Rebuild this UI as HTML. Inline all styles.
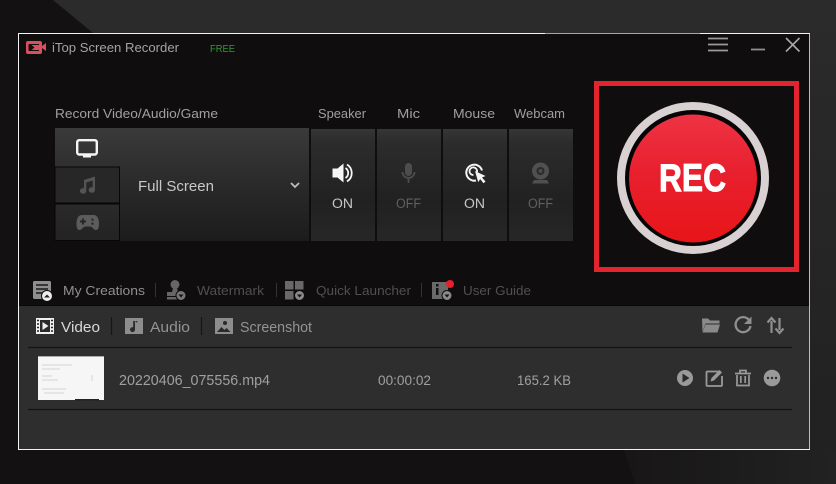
<!DOCTYPE html>
<html><head><meta charset="utf-8"><style>
html,body{margin:0;padding:0;background:#131112;width:836px;height:484px;overflow:hidden}
svg{display:block;font-family:"Liberation Sans",sans-serif;filter:blur(.35px)}
</style></head><body>
<svg width="836" height="484" viewBox="0 0 836 484" xmlns="http://www.w3.org/2000/svg">
<defs>
<linearGradient id="m" x1="0" y1="0" x2="0" y2="1"><stop offset="0" stop-color="#3a3a3a"/><stop offset=".5" stop-color="#2a2a2a"/><stop offset="1" stop-color="#1c1c1c"/></linearGradient>
<linearGradient id="s" x1="0" y1="0" x2="0" y2="1"><stop offset="0" stop-color="#363636"/><stop offset=".12" stop-color="#2c2c2c"/><stop offset=".65" stop-color="#212121"/><stop offset="1" stop-color="#272727"/></linearGradient>
<linearGradient id="t1" x1="0" y1="0" x2="0" y2="1"><stop offset="0" stop-color="#2a2a2a"/><stop offset="1" stop-color="#232323"/></linearGradient>
<linearGradient id="r" x1="0" y1="0" x2="0" y2="1"><stop offset="0" stop-color="#ee3344"/><stop offset=".45" stop-color="#e8202e"/><stop offset="1" stop-color="#e81518"/></linearGradient>
<linearGradient id="bgr" x1="0" y1="0" x2="1" y2="0"><stop offset="0" stop-color="#181616"/><stop offset="1" stop-color="#222"/></linearGradient>
<linearGradient id="rc" x1="0" y1="0" x2="0" y2="1"><stop offset="0" stop-color="#2a2a2a"/><stop offset="1" stop-color="#212121"/></linearGradient>
</defs>
<rect width="836" height="484" fill="#131112"/>
<polygon points="53,0 836,0 836,33 93,33" fill="#2b2b2b"/>
<rect x="810" y="33" width="26" height="417" fill="url(#rc)"/>
<polygon points="624,450 836,450 836,484 635,484" fill="url(#bgr)"/>

<!-- window -->
<rect x="18.500" y="33.500" width="791" height="416" fill="#0f0d0e"/>
<rect x="19" y="306" width="790" height="143" fill="#2e2e2e"/>
<rect x="19" y="305" width="790" height="1" fill="#080808"/>
<rect x="18.500" y="33.500" width="791" height="416" fill="none" stroke="#f2f2f2" stroke-width="1"/>
<line x1="545" y1="33.500" x2="700" y2="33.500" stroke="#a5a5a5"/>
<line x1="809.500" y1="34" x2="809.500" y2="449" stroke="#bdbdbd"/>

<!-- title bar -->
<g fill="#d8505c">
<path fill-rule="evenodd" d="M28 41h12a2 2 0 0 1 2 2v9a2 2 0 0 1-2 2H28a2 2 0 0 1-2-2v-9a2 2 0 0 1 2-2zm1.500 3a1 1 0 0 0-1 1v5a1 1 0 0 0 1 1H39v-1h-7.500l3-2.500-3-2.500H39v-1z"/>
<path d="M42 46l4-3v8l-4-3z"/>
</g>
<text x="52" y="52" font-size="13" fill="#a3a3a3" textLength="127" lengthAdjust="spacingAndGlyphs">iTop Screen Recorder</text>
<text x="210" y="52" font-size="10.500" fill="#2f9c35" textLength="25" lengthAdjust="spacingAndGlyphs">FREE</text>
<g stroke="#9a9a9a" stroke-width="1.800" fill="none">
<path d="M708 38.500h20M708 44.500h20M708 50.500h20"/>
<path d="M751 49.500h14" stroke="#8f8f8f"/>
<path d="M786 38l13.500 13.500M799.500 38L786 51.500" stroke="#a8a8a8" stroke-width="1.600"/>
</g>

<!-- labels -->
<g font-size="13" fill="#a0a0a0">
<text x="55" y="118" textLength="163" lengthAdjust="spacingAndGlyphs">Record Video/Audio/Game</text>
<text x="318" y="118" textLength="48" lengthAdjust="spacingAndGlyphs">Speaker</text>
<text x="397" y="118" textLength="23" lengthAdjust="spacingAndGlyphs">Mic</text>
<text x="453" y="118" textLength="42" lengthAdjust="spacingAndGlyphs">Mouse</text>
<text x="514" y="118" textLength="51" lengthAdjust="spacingAndGlyphs">Webcam</text>
</g>

<!-- main selector -->
<rect x="55" y="128" width="254" height="113" fill="url(#m)"/>
<rect x="55" y="167" width="64.500" height="36" fill="#272727" stroke="#070707"/>
<rect x="55" y="204" width="64.500" height="36.500" fill="url(#t1)" stroke="#070707"/>
<rect x="77.200" y="140.200" width="19.600" height="14.300" rx="2" fill="none" stroke="#f4f4f4" stroke-width="2.400"/>
<rect x="83" y="155" width="8" height="2.500" fill="#f4f4f4"/>
<path d="M84 180l11-3.500v13.500a3.200 2.800 0 1 1-2.300-2.700v-6.800l-6.400 2v8.500a3.200 2.800 0 1 1-2.300-2.700z" fill="#555"/>
<path fill-rule="evenodd" d="M82.500 215h11c4 0 5.500 4 5.500 9 0 4-1 6-3 6-2.500 0-3.500-3.500-6-3.500h-4.500c-2.500 0-3.500 3.500-6 3.500-2 0-3-2-3-6 0-5 1.500-9 5.500-9zM82 218.500v2h-2v2h2v2h2v-2h2v-2h-2v-2zM92.500 218.500a1.200 1.200 0 1 0 .01 0zM92.500 222.500a1.200 1.200 0 1 0 .01 0z" fill="#5c5c5c"/>
<text x="138" y="191" font-size="14.500" fill="#c8c8c8" textLength="76" lengthAdjust="spacingAndGlyphs">Full Screen</text>
<path d="M291 183l4 4 4-4" fill="none" stroke="#bdbdbd" stroke-width="1.800"/>

<!-- side buttons -->
<rect x="311" y="129" width="64" height="112" fill="url(#s)"/>
<rect x="377" y="129" width="64" height="112" fill="url(#s)"/>
<rect x="443" y="129" width="64" height="112" fill="url(#s)"/>
<rect x="509" y="129" width="64" height="112" fill="url(#s)"/>

<!-- speaker -->
<path d="M332.500 168.500h5l6-5v19l-6-5h-5z" fill="#f5f5f5"/>
<path d="M345.500 168a6 6 0 0 1 0 10M347 164.500a10 10 0 0 1 0 17" fill="none" stroke="#f5f5f5" stroke-width="1.800"/>
<!-- mic -->
<rect x="405" y="163" width="7" height="13" rx="3.500" fill="#4d4d4d"/>
<path d="M402.500 172a6 6 0 0 0 12 0M408.500 178v5" fill="none" stroke="#4d4d4d" stroke-width="1.800"/>
<!-- mouse target -->
<path d="M482 170.500a8 8 0 1 0-6 10" fill="none" stroke="#f5f5f5" stroke-width="2"/>
<path d="M477 172a3.800 3.800 0 1 0-3.500 3" fill="none" stroke="#f5f5f5" stroke-width="1.800"/>
<path d="M475 171l10.500 5-3.500 1.500 3.500 4-2 1.800-3.300-4.200-2 3z" fill="#f5f5f5"/>
<!-- webcam -->
<circle cx="540.500" cy="171" r="8.500" fill="#505050"/>
<circle cx="540.500" cy="171" r="4" fill="#2a2a2a"/>
<circle cx="540.500" cy="171" r="2" fill="#4d4d4d"/>
<path d="M534 180h13l2 3.500h-17z" fill="#505050"/>

<g font-size="13.500">
<text x="332" y="208" fill="#c8c8c8" textLength="21" lengthAdjust="spacingAndGlyphs">ON</text>
<text x="396" y="208" fill="#606060" textLength="25" lengthAdjust="spacingAndGlyphs">OFF</text>
<text x="464" y="208" fill="#c8c8c8" textLength="21" lengthAdjust="spacingAndGlyphs">ON</text>
<text x="528" y="208" fill="#606060" textLength="25" lengthAdjust="spacingAndGlyphs">OFF</text>
</g>

<!-- REC -->
<rect x="596.500" y="83.500" width="200" height="186" fill="none" stroke="#e3242e" stroke-width="5"/>
<circle cx="693" cy="178" r="72" fill="#060404" stroke="#d9d0d1" stroke-width="8"/>
<circle cx="693" cy="178.500" r="64" fill="url(#r)"/>
<text x="659" y="191" font-size="39" font-weight="bold" fill="#fff" stroke="#fff" stroke-width="1" textLength="67" lengthAdjust="spacingAndGlyphs">REC</text>

<!-- toolbar row -->
<g font-size="13">
<text x="63" y="295" fill="#909090" textLength="82" lengthAdjust="spacingAndGlyphs">My Creations</text>
<text x="197" y="295" fill="#505050" textLength="67" lengthAdjust="spacingAndGlyphs">Watermark</text>
<text x="316" y="295" fill="#505050" textLength="95" lengthAdjust="spacingAndGlyphs">Quick Launcher</text>
<text x="463" y="295" fill="#505050" textLength="68" lengthAdjust="spacingAndGlyphs">User Guide</text>
</g>
<path d="M155.500 283v14M276.500 283v14M421.500 283v14" stroke="#333"/>
<!-- my creations icon -->
<rect x="33" y="281" width="18" height="18" rx="1.500" fill="#8f8f8f"/>
<path d="M36 285h12M36 289h12M36 293h7" stroke="#1a1a1a" stroke-width="1.500"/>
<circle cx="47" cy="296" r="5.500" fill="#eee" stroke="#0f0d0e" stroke-width="1"/>
<path d="M44 297.500l3-3 3 3z" fill="#222"/>
<!-- watermark icon -->
<circle cx="175" cy="284.500" r="4.500" fill="#666"/>
<path d="M173 288h4l1 4h5v4h-16v-4h5z" fill="#666"/>
<rect x="167" y="297" width="14" height="2.500" fill="#666"/>
<circle cx="181" cy="295.500" r="5" fill="#777" stroke="#0f0d0e"/>
<path d="M178.500 294.500h5l-2.500 3z" fill="#111"/>
<!-- quick launcher icon -->
<g fill="#696969"><rect x="285" y="281" width="8.500" height="8.500"/><rect x="295" y="281" width="8.500" height="8.500"/><rect x="285" y="291" width="8.500" height="8.500"/></g>
<circle cx="299.500" cy="295.500" r="5" fill="#8a8a8a" stroke="#0f0d0e"/>
<path d="M297 294.500h5l-2.500 3z" fill="#111"/>
<!-- user guide icon -->
<rect x="432" y="282" width="16" height="17" fill="#6a6a6a"/>
<rect x="436" y="284" width="2.500" height="2.500" fill="#111"/><rect x="436" y="288" width="2.500" height="7" fill="#111"/>
<circle cx="447" cy="295.500" r="5" fill="#8a8a8a" stroke="#0f0d0e"/>
<path d="M444.500 294.500h5l-2.500 3z" fill="#111"/>
<circle cx="450" cy="284" r="4" fill="#e8202e"/>

<!-- tabs -->
<g font-size="14.500">
<text x="61" y="332" fill="#d8d8d8" textLength="39" lengthAdjust="spacingAndGlyphs">Video</text>
<text x="150" y="332" fill="#939393" textLength="40" lengthAdjust="spacingAndGlyphs">Audio</text>
<text x="240" y="332" fill="#939393" textLength="72" lengthAdjust="spacingAndGlyphs">Screenshot</text>
</g>
<path d="M111.500 317v18M201.500 317v18" stroke="#161616" stroke-width="1.200"/>
<!-- film -->
<rect x="36" y="318" width="18" height="16" fill="#f0f0f0"/>
<path d="M40 320h10v12H40z" fill="#2a2a2a"/>
<path d="M37 320.500h2M37 324h2M37 327.500h2M37 331h2M51 320.500h2M51 324h2M51 327.500h2M51 331h2" stroke="#222" stroke-width="1.500"/>
<path d="M42.500 322l6 4-6 4z" fill="#f0f0f0"/>
<!-- audio -->
<rect x="125" y="318" width="18" height="16" fill="#8d8d8d"/>
<path d="M135 321v8.500a2.500 2.500 0 1 1-1.800-2.300V321h4v2z" fill="#2a2a2a"/>
<!-- screenshot -->
<rect x="215" y="318" width="18" height="16" fill="#8d8d8d"/>
<path d="M217 332l4.500-5 3 3 2-2 4 4z" fill="#2a2a2a"/>
<circle cx="225" cy="323" r="2" fill="#2a2a2a"/>

<!-- right tools -->
<path d="M702 318.500h6l2 2h9.500v3h-14l-3 8.500z" fill="#8a8a8a"/>
<path d="M705.500 324.500h14.500l-2.500 8h-15z" fill="#8a8a8a"/>
<path d="M749 320a7.500 7.500 0 1 0 1.500 6" fill="none" stroke="#8f8f8f" stroke-width="2.300"/>
<path d="M751.500 316.500v7.500h-7.500z" fill="#8f8f8f"/>
<path d="M771.500 333v-12M767.500 322.500l4-4.500 4 4.500M779.500 318v12M775.500 328.500l4 4.500 4-4.500" fill="none" stroke="#8f8f8f" stroke-width="2.200"/>

<line x1="28" y1="347.500" x2="792" y2="347.500" stroke="#141414" stroke-width="1.300"/>
<line x1="28" y1="409.500" x2="792" y2="409.500" stroke="#141414" stroke-width="1.300"/>

<!-- row -->
<rect x="38" y="356" width="66" height="44" fill="#f6f6f6"/>
<rect x="38" y="356" width="66" height="1" fill="#aaa"/>
<rect x="75" y="399" width="24" height="1.500" fill="#222"/>
<path d="M42 365h30M42 369h18M42 376h10M42 380h16M42 389h24M44 393h20M92 375v6" stroke="#d4d4d4" stroke-width="1"/>
<text x="119" y="385" font-size="14.500" fill="#a0a0a0" textLength="151" lengthAdjust="spacingAndGlyphs">20220406_075556.mp4</text>
<text x="378" y="385" font-size="13.500" fill="#a0a0a0" textLength="53" lengthAdjust="spacingAndGlyphs">00:00:02</text>
<text x="517" y="385" font-size="13.500" fill="#a0a0a0" textLength="54" lengthAdjust="spacingAndGlyphs">165.2 KB</text>

<circle cx="685" cy="378" r="8" fill="#9a9a9a"/>
<path d="M682.500 373.500l7 4.500-7 4.500z" fill="#2a2a2a"/>
<path d="M719 371.500h-11.500a1 1 0 0 0-1 1v12.500a1 1 0 0 0 1 1h13.500a1 1 0 0 0 1-1v-9" fill="none" stroke="#9a9a9a" stroke-width="1.800"/>
<path d="M710.500 381.500l1-3.500 8-8 2.500 2.500-8 8z" fill="#9a9a9a"/>
<path d="M735 373.500h16M740 373v-2.500h6v2.500" fill="none" stroke="#9a9a9a" stroke-width="1.700"/>
<path d="M737 375v10.500h12V375M740.800 376v7M745.200 376v7" fill="none" stroke="#9a9a9a" stroke-width="1.700"/>
<circle cx="772" cy="378" r="8.300" fill="#9a9a9a"/>
<g fill="#2a2a2a"><circle cx="768" cy="378" r="1.200"/><circle cx="772" cy="378" r="1.200"/><circle cx="776" cy="378" r="1.200"/></g>
</svg>
</body></html>
